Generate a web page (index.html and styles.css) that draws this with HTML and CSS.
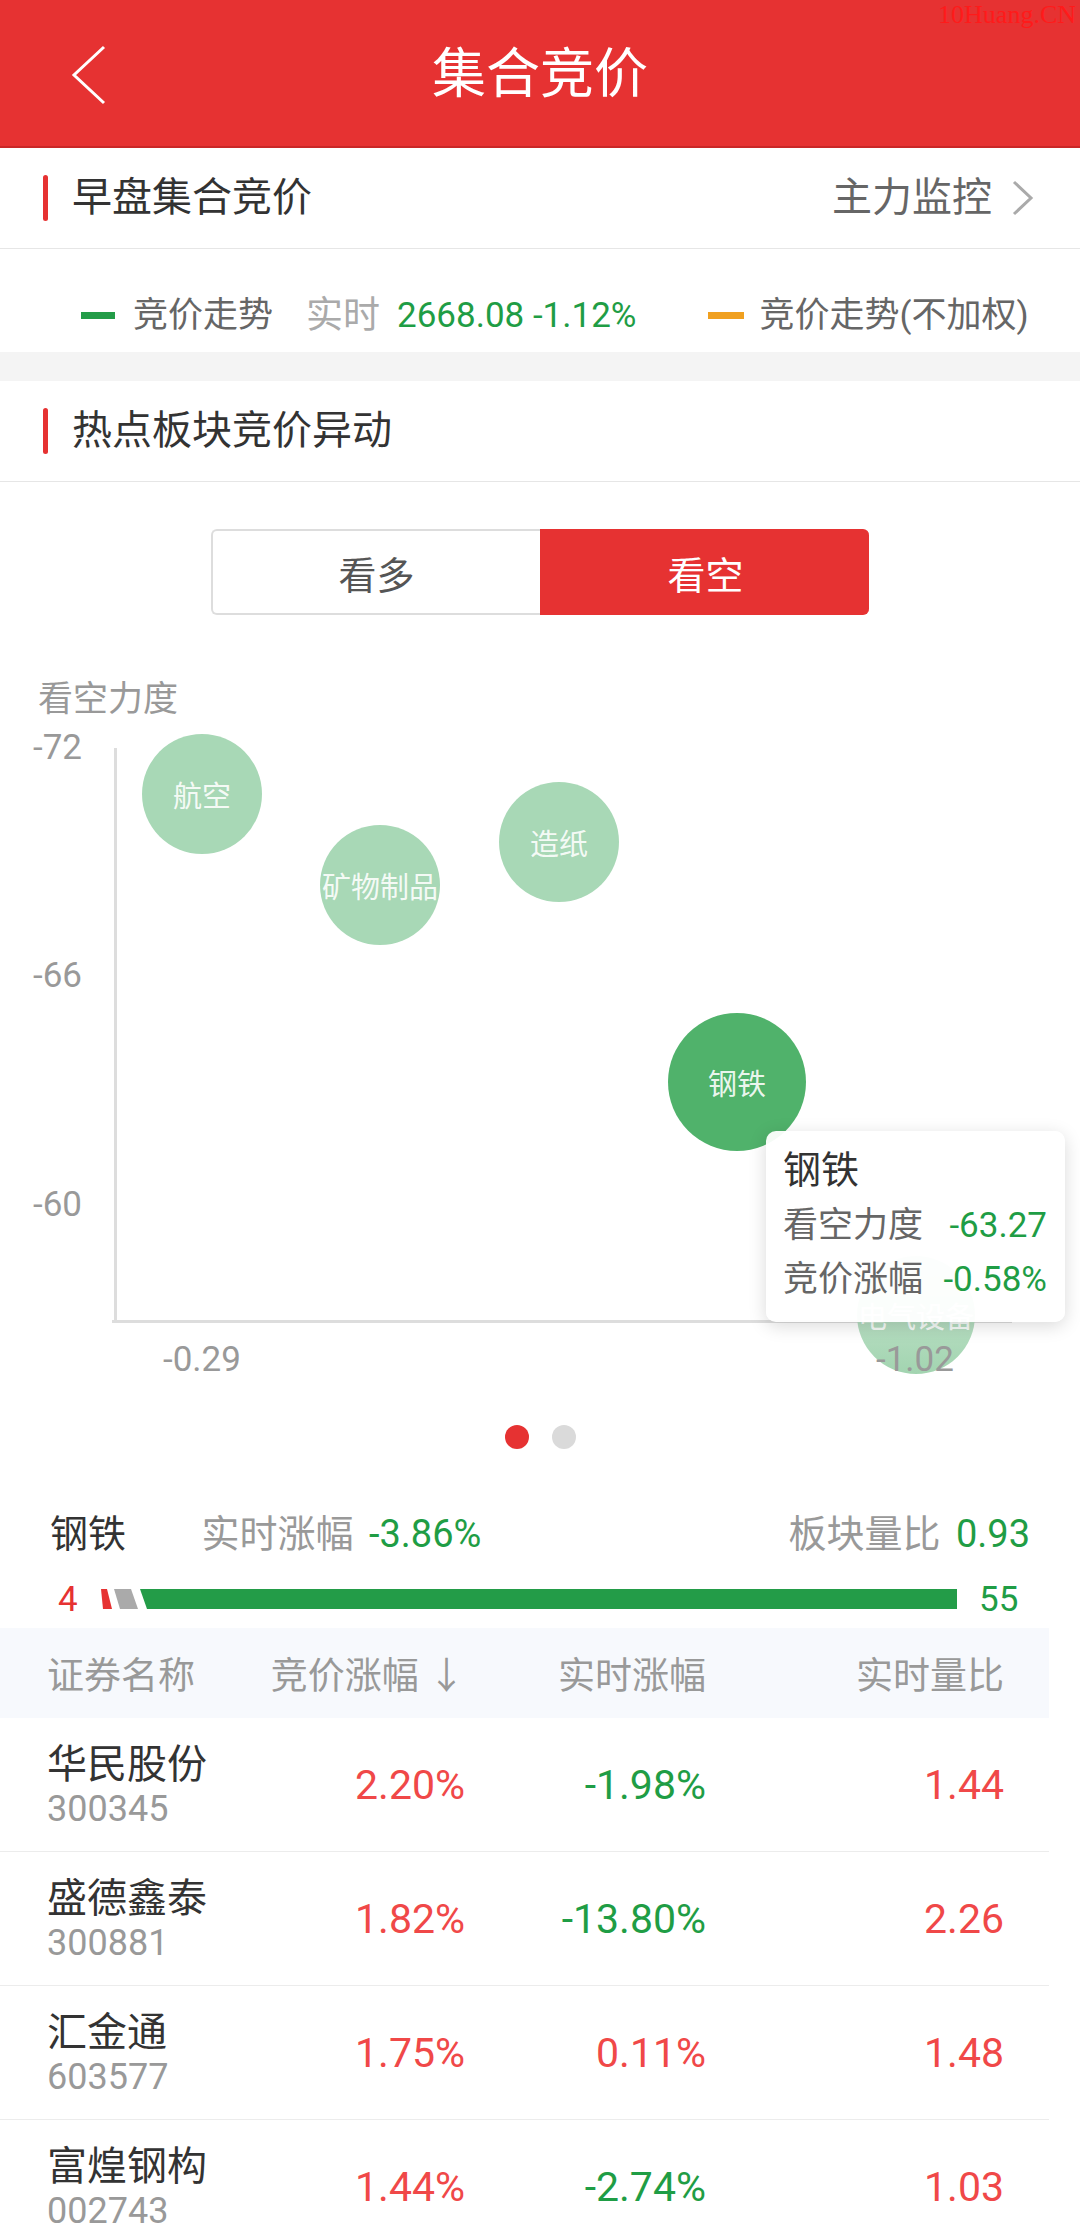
FILE: index.html
```html
<!DOCTYPE html>
<html lang="zh-CN">
<head>
    <meta charset="UTF-8">
    <meta name="viewport" content="width=device-width, initial-scale=1.0">
    <title>集合竞价</title>
    <link rel="stylesheet" href="styles.css">
</head>
<body>
    <header class="topbar">
        <a class="back" href="#">
            <svg width="40" height="62" viewBox="0 0 40 62"><polyline points="34,3 4,31 34,59" fill="none" stroke="#fff" stroke-width="3"/></svg>
        </a>
        <h1>集合竞价</h1>
        <span class="watermark">10Huang.CN</span>
    </header>

    <div class="sec-head">
        <span class="mark"></span>
        <span class="sec-title">早盘集合竞价</span>
        <a class="more" href="#">主力监控
            <svg width="26" height="36" viewBox="0 0 26 36"><polyline points="4,2 21,18 4,34" fill="none" stroke="#aaa" stroke-width="3"/></svg>
        </a>
    </div>

    <div class="legend">
        <span class="dash green"></span>
        <span class="lg-label">竞价走势</span>
        <span class="lg-live">实时</span>
        <span class="lg-value">2668.08 -1.12%</span>
        <span class="dash orange"></span>
        <span class="lg-label">竞价走势(不加权)</span>
    </div>

    <div class="gap"></div>

    <div class="sec-head">
        <span class="mark"></span>
        <span class="sec-title">热点板块竞价异动</span>
    </div>

    <div class="chart-panel">
        <div class="toggle">
            <button class="tab">看多</button>
            <button class="tab active">看空</button>
        </div>

        <div class="chart">
            <span class="y-title">看空力度</span>
            <span class="y-tick" style="top: 88px">-72</span>
            <span class="y-tick" style="top: 316px">-66</span>
            <span class="y-tick" style="top: 545px">-60</span>
            <div class="axis-y"></div>
            <div class="axis-x"></div>

            <div class="bubble" style="left: 142px; top: 94px">航空</div>
            <div class="bubble" style="left: 320px; top: 185px">矿物制品</div>
            <div class="bubble" style="left: 499px; top: 142px">造纸</div>
            <div class="bubble big" style="left: 668px; top: 373px">钢铁</div>
            <div class="bubble fade" style="left: 857px; top: 616px">电气设备</div>

            <span class="x-tick" style="left: 142px">-0.29</span>
            <span class="x-tick" style="left: 855px">-1.02</span>

            <div class="tooltip">
                <div class="tt-title">钢铁</div>
                <div class="tt-row"><span>看空力度</span><span class="up-g">-63.27</span></div>
                <div class="tt-row"><span>竞价涨幅</span><span class="up-g">-0.58%</span></div>
            </div>
        </div>

        <div class="pager">
            <span class="dot on"></span>
            <span class="dot"></span>
        </div>
    </div>

    <div class="sector">
        <div class="sector-left">
            <span class="sector-name">钢铁</span>
            <span class="muted sp-l">实时涨幅</span>
            <span class="up-g sp-s">-3.86%</span>
        </div>
        <div class="sector-right">
            <span class="muted">板块量比</span>
            <span class="up-g sp-s">0.93</span>
        </div>
    </div>

    <div class="ratio">
        <span class="ratio-up">4</span>
        <svg class="ratio-bar" width="856" height="20" viewBox="0 0 856 20">
            <polygon points="0,0 6,0 11,20 2,20" fill="#e63232"/>
            <polygon points="13,0 30,0 37,20 19,20" fill="#aaaaaa"/>
            <polygon points="39,0 856,0 856,20 46,20" fill="#239c48"/>
        </svg>
        <span class="ratio-down">55</span>
    </div>

    <div class="table">
        <div class="t-head">
            <span class="c-name">证券名称</span>
            <span>竞价涨幅 ↓</span>
            <span>实时涨幅</span>
            <span>实时量比</span>
        </div>
        <div class="t-row">
            <div class="c-name"><div class="s-name">华民股份</div><div class="s-code">300345</div></div>
            <span class="up-r">2.20%</span>
            <span class="up-g">-1.98%</span>
            <span class="up-r">1.44</span>
        </div>
        <div class="t-row">
            <div class="c-name"><div class="s-name">盛德鑫泰</div><div class="s-code">300881</div></div>
            <span class="up-r">1.82%</span>
            <span class="up-g">-13.80%</span>
            <span class="up-r">2.26</span>
        </div>
        <div class="t-row">
            <div class="c-name"><div class="s-name">汇金通</div><div class="s-code">603577</div></div>
            <span class="up-r">1.75%</span>
            <span class="up-r">0.11%</span>
            <span class="up-r">1.48</span>
        </div>
        <div class="t-row">
            <div class="c-name"><div class="s-name">富煌钢构</div><div class="s-code">002743</div></div>
            <span class="up-r">1.44%</span>
            <span class="up-g">-2.74%</span>
            <span class="up-r">1.03</span>
        </div>
    </div>
</body>
</html>
```
FILE: styles.css
```css
body {
    margin: 0;
    font-family: Roboto, "Noto Sans CJK SC", sans-serif;
    background: #fff;
    color: #333;
    overflow: hidden;
}
.topbar {
    position: relative;
    height: 146px;
    background-color: #e63232;
    border-bottom: 2px solid #c92727;
    display: flex;
    align-items: center;
    justify-content: center;
}
.back {
    position: absolute;
    left: 70px;
    top: 44px;
    display: block;
    line-height: 0;
}
.topbar h1 {
    margin: 0;
    color: #fff;
    font-size: 54px;
    font-weight: 400;
    line-height: 60px;
    margin-top: 4px;
}
.watermark {
    position: absolute;
    right: 4px;
    top: 0;
    font-family: "Liberation Serif", serif;
    font-size: 26px;
    line-height: 30px;
    color: #ff1a1a;
}
.sec-head {
    height: 100px;
    border-bottom: 1px solid #e6e6e6;
    display: flex;
    align-items: center;
    padding: 0 44px 0 43px;
}
.mark {
    width: 5px;
    height: 46px;
    border-radius: 3px;
    background: #e63232;
    margin-right: 24px;
}
.sec-title {
    font-size: 40px;
    line-height: 48px;
    color: #333;
    flex: 1;
}
.more {
    display: flex;
    align-items: center;
    font-size: 40px;
    line-height: 48px;
    color: #666;
    text-decoration: none;
}
.more svg {
    margin-left: 18px;
}
.legend {
    box-sizing: border-box;
    height: 103px;
    padding: 30px 0 0 81px;
    display: flex;
    align-items: center;
    font-size: 35px;
    line-height: 44px;
}
.dash {
    width: 34px;
    height: 7px;
    margin-right: 18px;
}
.dash.green { background: #239c48; }
.dash.orange { background: #f0a020; width: 36px; margin-right: 16px; }
.lg-label { color: #666; }
.lg-live {
    color: #aaa;
    font-size: 37px;
    margin-left: 33px;
    margin-right: 17px;
}
.lg-value {
    color: #1f9d45;
    margin-right: 71px;
}
.gap {
    height: 29px;
    background: #f4f4f4;
}
.chart-panel {
    padding-top: 47px;
}
.toggle {
    display: flex;
    width: 658px;
    height: 86px;
    margin: 0 auto 0 211px;
}
.tab {
    flex: 1;
    font-family: inherit;
    font-size: 38px;
    color: #555;
    background: #fff;
    border: 2px solid #ddd;
    border-right: none;
    border-radius: 6px 0 0 6px;
    padding: 0;
}
.tab.active {
    background: #e63232;
    border-color: #e63232;
    color: #fff;
    border-radius: 0 6px 6px 0;
}
.chart {
    position: relative;
    height: 770px;
    margin-top: 25px;
}
.y-title {
    position: absolute;
    left: 38px;
    top: 40px;
    font-size: 35px;
    line-height: 40px;
    color: #999;
}
.y-tick {
    position: absolute;
    left: 33px;
    font-size: 35px;
    line-height: 40px;
    color: #999;
}
.axis-y {
    position: absolute;
    left: 114px;
    top: 108px;
    width: 3px;
    height: 575px;
    background: #ddd;
}
.axis-x {
    position: absolute;
    left: 112px;
    top: 680px;
    width: 900px;
    height: 3px;
    background: #ddd;
}
.bubble {
    position: absolute;
    width: 120px;
    height: 120px;
    border-radius: 50%;
    background: #a8d8b6;
    color: rgba(255, 255, 255, 0.9);
    font-size: 29px;
    display: flex;
    align-items: center;
    justify-content: center;
    white-space: nowrap;
}
.bubble.big {
    width: 138px;
    height: 138px;
    background: #50b26b;
}
.bubble.fade {
    width: 118px;
    height: 118px;
    background: linear-gradient(#cfe9d6, #a2d4b0);
}
.x-tick {
    position: absolute;
    top: 700px;
    width: 120px;
    text-align: center;
    font-size: 35px;
    line-height: 40px;
    color: #999;
}
.tooltip {
    position: absolute;
    left: 766px;
    top: 491px;
    width: 299px;
    height: 191px;
    box-sizing: border-box;
    padding: 14px 18px 0 17px;
    background: rgba(255, 255, 255, 0.94);
    border-radius: 10px;
    box-shadow: 0 4px 18px rgba(0, 0, 0, 0.15);
}
.tt-title {
    font-size: 38px;
    line-height: 50px;
    color: #333;
    margin-bottom: 4px;
}
.tt-row {
    display: flex;
    justify-content: space-between;
    font-size: 35px;
    line-height: 54px;
    color: #666;
}
.pager {
    display: flex;
    justify-content: center;
    gap: 23px;
    padding: 15px 0;
}
.dot {
    width: 24px;
    height: 24px;
    border-radius: 50%;
    background: #dadada;
}
.dot.on { background: #e63232; }
.up-g { color: #1f9d45; }
.up-r { color: #f04848; }
.muted { color: #999; }
.sector {
    display: flex;
    justify-content: space-between;
    padding: 50px 50px 0 50px;
    font-size: 38px;
    line-height: 40px;
}
.sector-name { color: #333; }
.sp-l { margin-left: 66px; }
.sp-s { margin-left: 6px; }
.ratio {
    display: flex;
    align-items: center;
    height: 40px;
    margin-top: 25px;
    padding-left: 58px;
    font-size: 35px;
}
.ratio-up { color: #e63232; width: 20px; }
.ratio-bar { margin-left: 23px; }
.ratio-down { color: #1f9d45; margin-left: 22px; }
.table {
    width: 1049px;
    margin-top: 9px;
}
.t-head, .t-row {
    display: grid;
    grid-template-columns: 218px 200px 241px 298px;
    align-items: center;
    padding-left: 47px;
    text-align: right;
}
.t-head {
    height: 90px;
    background: #f7f9fd;
    font-size: 37px;
    color: #999;
}
.t-row {
    height: 133px;
    border-bottom: 1px solid #ececec;
    font-size: 41px;
}
.c-name { text-align: left; }
.s-name {
    font-size: 40px;
    line-height: 48px;
    color: #333;
}
.s-code {
    font-size: 36px;
    line-height: 40px;
    color: #999;
}
```
